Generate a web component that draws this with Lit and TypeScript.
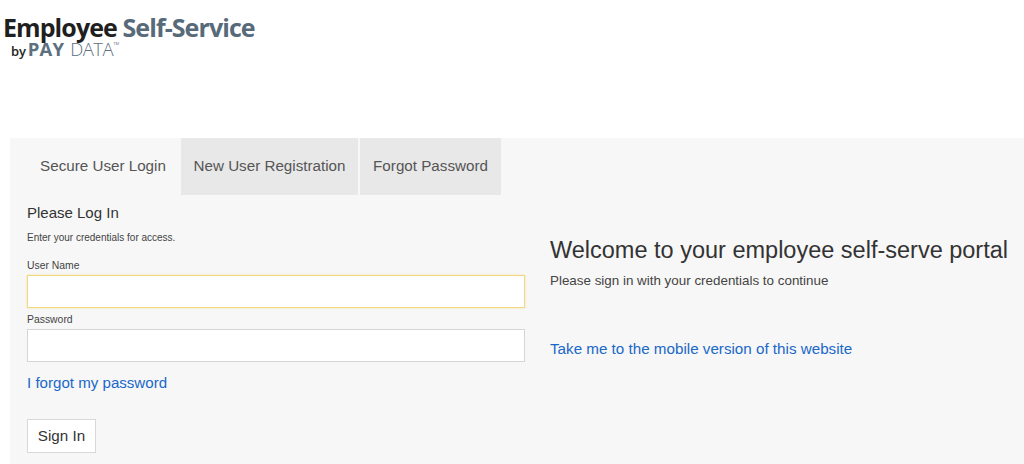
import { LitElement, html, css } from "lit";
import { customElement } from "lit/decorators.js";

@customElement("app-root")
export class AppRoot extends LitElement {
  static styles = css`
    :host { display: block; width: 1024px; height: 464px; overflow: hidden; background: #fff; font-family: "Liberation Sans", Arial, sans-serif; color: #333; }
    .logo { height: 138px; padding: 12px 0 0 3px; box-sizing: border-box; font-family: "Open Sans", sans-serif; }
    .logo-main { font-size: 25px; line-height: 30px; font-weight: 700; letter-spacing: -0.92px; color: #1f1f1f; white-space: nowrap; }
    .logo-main span { color: #566a7a; }
    .logo-sub { display: flex; align-items: baseline; margin: -2px 0 0 8px; height: 18px; line-height: 18px; white-space: nowrap; }
    .by { font-size: 13px; font-weight: 600; color: #222; margin-right: 2px; letter-spacing: -0.2px; }
    .pay { font-size: 18.5px; font-weight: 700; color: #5d7080; letter-spacing: 0.2px; margin-right: 6px; }
    .data { font-size: 18.5px; font-weight: 300; color: #5d7080; letter-spacing: -0.5px; }
    .tm { font-size: 4px; line-height: 6px; color: #5d7080; align-self: flex-start; margin-top: 1px; }
    .panel { margin-left: 10px; height: 326px; background: #f7f7f7; box-sizing: border-box; }
    .tabs { display: flex; height: 57px; gap: 2px; }
    .tab { display: flex; align-items: center; justify-content: center; font-size: 15.2px; padding-bottom: 2px; color: #555; background: #e8e8e8; box-sizing: border-box; height: 57px; }
    .tab.active { background: transparent; width: 171px; margin-right: -2px; padding-left: 15px; }
    .tab.reg { width: 177px; }
    .tab.forgot { width: 141px; }
    .body { display: flex; }
    .left { width: 498px; margin-left: 17px; padding-top: 9px; flex: none; }
    .right { margin-left: 25px; padding-top: 41px; flex: 1; white-space: nowrap; }
    .h { font-size: 15px; line-height: 18px; color: #333; }
    .sub { font-size: 10px; line-height: 12px; margin-top: 10px; color: #444; }
    .label { display: block; font-size: 10.4px; line-height: 12px; color: #444; }
    .l1 { margin-top: 16px; }
    .l2 { margin-top: 6px; }
    .input { display: block; width: 100%; height: 33px; box-sizing: border-box; background: #fff; border: 1px solid #d6d6d6; margin-top: 3px; padding: 0 8px; outline: none; }
    .input.focus { border-color: #f2d782; box-shadow: 0 0 2px #f7e3a8; }
    a { color: #1a68c9; text-decoration: none; }
    .forgot-link { display: block; font-size: 15.1px; line-height: 18px; margin-top: 12px; }
    .btn { display: block; margin-top: 27px; width: 69px; height: 34px; box-sizing: border-box; background: #fff; border: 1px solid #d8d8d8; font: 15.2px "Liberation Sans", Arial, sans-serif; color: #333; padding: 0 0 2px; }
    .title { font-size: 23.5px; line-height: 28px; color: #333; }
    .msg { font-size: 13.4px; line-height: 16px; margin-top: 9px; color: #444; }
    .mobile { display: block; font-size: 15.2px; line-height: 18px; margin-top: 51px; }
  `;

  render() {
    return html`
      <div class="logo">
        <div class="logo-main">Employee <span>Self-Service</span></div>
        <div class="logo-sub"><span class="by">by</span><span class="pay">PAY</span><span class="data">DATA</span><span class="tm">TM</span></div>
      </div>
      <div class="panel">
        <div class="tabs">
          <div class="tab active">Secure User Login</div>
          <div class="tab reg">New User Registration</div>
          <div class="tab forgot">Forgot Password</div>
        </div>
        <div class="body">
          <div class="left">
            <div class="h">Please Log In</div>
            <div class="sub">Enter your credentials for access.</div>
            <label class="label l1">User Name</label>
            <input class="input focus" type="text" />
            <label class="label l2">Password</label>
            <input class="input" type="password" />
            <a class="forgot-link" href="#">I forgot my password</a>
            <button class="btn">Sign In</button>
          </div>
          <div class="right">
            <div class="title">Welcome to your employee self-serve portal</div>
            <div class="msg">Please sign in with your credentials to continue</div>
            <a class="mobile" href="#">Take me to the mobile version of this website</a>
          </div>
        </div>
      </div>
    `;
  }
}
